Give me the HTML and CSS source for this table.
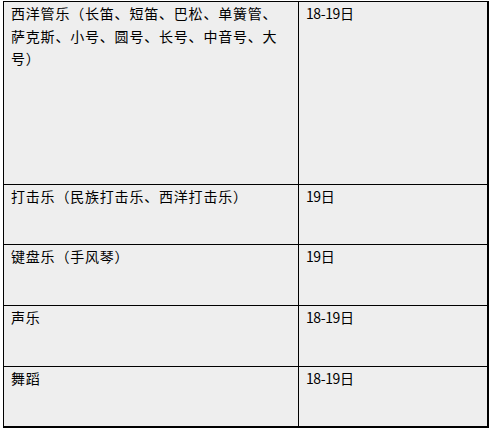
FILE: index.html
```html
<!DOCTYPE html>
<html lang="zh">
<head>
<meta charset="utf-8">
<link rel="stylesheet" href="styles.css">
</head>
<body>
<table class="schedule">
  <tr class="row-tall">
    <td class="name">西洋管乐（长笛、短笛、巴松、单簧管、萨克斯、小号、圆号、长号、中音号、大号）</td>
    <td class="date">18-19日</td>
  </tr>
  <tr class="row-a">
    <td class="name">打击乐（民族打击乐、西洋打击乐）</td>
    <td class="date">19日</td>
  </tr>
  <tr class="row-b">
    <td class="name">键盘乐（手风琴）</td>
    <td class="date">19日</td>
  </tr>
  <tr class="row-b">
    <td class="name">声乐</td>
    <td class="date">18-19日</td>
  </tr>
  <tr class="row-a">
    <td class="name">舞蹈</td>
    <td class="date">18-19日</td>
  </tr>
</table>
</body>
</html>
```

FILE: styles.css
```css
html, body {
  margin: 0;
  padding: 0;
  background: #ffffff;
}

body {
  padding: 1px 0 0 3px;
  font-family: "Noto Sans CJK SC", "Noto Sans", sans-serif;
  font-size: 14px;
  color: #000000;
}

.schedule {
  border-collapse: collapse;
  width: 486px;
  background: #eeeeee;
  table-layout: fixed;
}

.schedule td {
  border: 1px solid #000000;
  vertical-align: top;
  line-height: 22.5px;
  padding: 0 0 0 7px;
}

.schedule td.name {
  width: 270px;
  padding-right: 17px;
  letter-spacing: 0.8px;
}

.schedule td.date {
  padding-left: 7px;
  letter-spacing: -0.4px;
}

.row-tall td { height: 182px; }
.row-a td { height: 59px; }
.row-b td { height: 60px; }

.schedule tr:last-child td {
  border-bottom-width: 2px;
}
.schedule td.date {
  border-right-width: 2px;
}
```
